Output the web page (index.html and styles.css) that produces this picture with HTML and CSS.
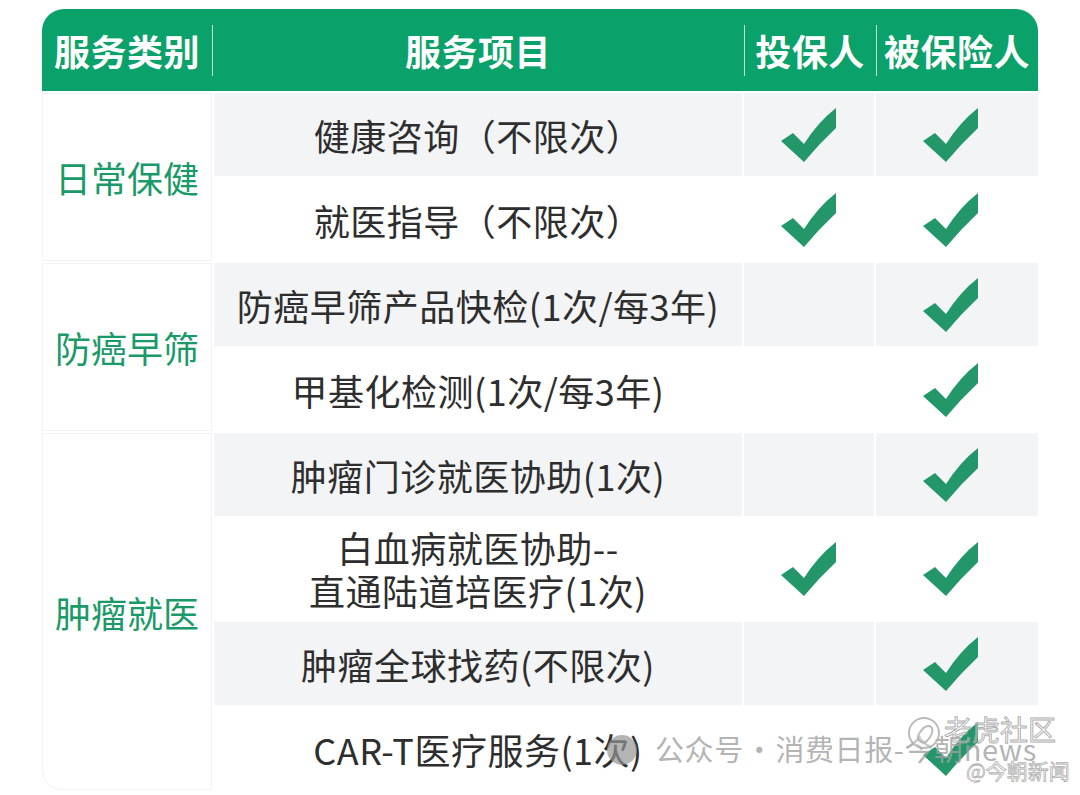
FILE: index.html
```html
<!DOCTYPE html>
<html lang="zh-CN">
<head>
<meta charset="utf-8">
<title>服务项目</title>
<link rel="stylesheet" href="styles.css">
</head>
<body>
<svg class="defs" width="0" height="0" aria-hidden="true">
  <symbol id="chk" viewBox="0 0 56 56">
    <path d="M0 34 L12 26 L23 37 Q37 15 55 1 L55 21 Q38 37 23 55 Z"/>
  </symbol>
</svg>
<div class="page">
  <div class="table">
    <div class="head">
      <div class="hcell">服务类别</div>
      <div class="hcell sep">服务项目</div>
      <div class="hcell sep">投保人</div>
      <div class="hcell sep">被保险人</div>
    </div>
    <div class="body">
      <div class="cat r1-2">日常保健</div>
      <div class="item g">健康咨询（不限次）</div>
      <div class="ck g"><svg><use href="#chk"/></svg></div>
      <div class="ck c2 g"><svg><use href="#chk"/></svg></div>
      <div class="item">就医指导（不限次）</div>
      <div class="ck"><svg><use href="#chk"/></svg></div>
      <div class="ck c2"><svg><use href="#chk"/></svg></div>

      <div class="cat r3-4">防癌早筛</div>
      <div class="item g">防癌早筛产品快检(1次/每3年)</div>
      <div class="ck g"></div>
      <div class="ck c2 g"><svg><use href="#chk"/></svg></div>
      <div class="item">甲基化检测(1次/每3年)</div>
      <div class="ck"></div>
      <div class="ck c2"><svg><use href="#chk"/></svg></div>

      <div class="cat r5-8 last">肿瘤就医</div>
      <div class="item g">肿瘤门诊就医协助(1次)</div>
      <div class="ck g"></div>
      <div class="ck c2 g"><svg><use href="#chk"/></svg></div>
      <div class="item two"><span class="ln">白血病就医协助--</span><span class="ln">直通陆道培医疗(1次)</span></div>
      <div class="ck"><svg><use href="#chk"/></svg></div>
      <div class="ck c2"><svg><use href="#chk"/></svg></div>
      <div class="item g">肿瘤全球找药(不限次)</div>
      <div class="ck g"></div>
      <div class="ck c2 g"><svg><use href="#chk"/></svg></div>
      <div class="item">CAR-T医疗服务(1次)</div>
      <div class="ck"></div>
      <div class="ck c2"><svg><use href="#chk"/></svg></div>
    </div>
  </div>
  <div class="wm-avatar"></div>
  <div class="wm-text">公众号<span class="wm-dot">·</span>消费日报-今朝news</div>
  <div class="wm-logo"><span class="wm-logo-in"></span></div>
  <div class="wm-brand">老虎社区</div>
  <div class="wm-handle">@今朝新闻</div>
</div>
</body>
</html>
```
FILE: styles.css
```css
html, body {
  margin: 0;
  padding: 0;
  background: #ffffff;
}
body {
  font-family: "Noto Sans CJK SC", "Noto Sans", sans-serif;
  width: 1080px;
  height: 795px;
  overflow: hidden;
}
.defs {
  position: absolute;
  width: 0;
  height: 0;
}
.page {
  position: relative;
  width: 1080px;
  height: 795px;
  padding: 9px 0 0 42px;
  box-sizing: border-box;
}
.table {
  width: 996px;
}
.head {
  display: grid;
  grid-template-columns: 170px 532px 132px 162px;
  height: 82px;
  background: #0ba16a;
  border-radius: 22px 22px 0 0;
  color: #ffffff;
  font-weight: 700;
  font-size: 36px;
}
.hcell {
  display: flex;
  align-items: center;
  justify-content: center;
  position: relative;
  letter-spacing: 0.5px;
}
.hcell.sep::before {
  content: "";
  position: absolute;
  left: 0;
  top: 16px;
  bottom: 15px;
  width: 1px;
  background: rgba(255, 255, 255, 0.75);
}
.body {
  margin-top: 2px;
  display: grid;
  grid-template-columns: 170px 528px 130px 162px;
  grid-template-rows: 83px 83px 83px 83px 83px 102px 83px 83px;
  column-gap: 2px;
  row-gap: 2px;
}
.cat {
  grid-column: 1;
  display: flex;
  align-items: center;
  justify-content: center;
  color: #1b9a69;
  font-size: 36px;
  font-weight: 400;
  background: #ffffff;
  box-shadow: inset 0 0 0 1px #f1f2f4;
}
.r1-2 { grid-row: 1 / 3; }
.r3-4 { grid-row: 3 / 5; }
.r5-8 { grid-row: 5 / 9; }
.last { border-bottom-left-radius: 20px; }
.item {
  display: flex;
  align-items: center;
  justify-content: center;
  text-align: center;
  color: #2e2e2e;
  font-size: 36px;
  letter-spacing: 0.5px;
  font-weight: 400;
  background: #ffffff;
}
.item.two {
  flex-direction: column;
  gap: 0;
}
.item.two .ln {
  display: block;
  line-height: 43px;
  height: 43px;
}
.ck {
  display: flex;
  align-items: center;
  justify-content: center;
  background: #ffffff;
}
.ck.c2 svg {
  margin-right: 12px;
}
.g {
  background: #f3f4f6;
}
.ck svg {
  width: 56px;
  height: 56px;
  fill: #23976a;
}
.wm-avatar {
  position: absolute;
  left: 607px;
  top: 735px;
  width: 30px;
  height: 30px;
  border-radius: 50%;
  background: rgba(150, 150, 150, 0.7);
}
.wm-text {
  position: absolute;
  left: 655px;
  top: 729px;
  font-size: 29px;
  line-height: 38px;
  letter-spacing: 0.6px;
  color: rgba(160, 160, 160, 0.8);
  white-space: nowrap;
}
.wm-dot {
  margin: 0 1px;
}
.wm-logo {
  position: absolute;
  left: 908px;
  top: 717px;
  width: 28px;
  height: 28px;
  border-radius: 50%;
  border: 2px solid rgba(170, 170, 170, 0.8);
  background: rgba(255, 255, 255, 0.3);
}
.wm-logo-in {
  position: absolute;
  left: 9px;
  top: 5px;
  width: 9px;
  height: 16px;
  border-radius: 50% 50% 40% 40%;
  border: 2px solid rgba(170, 170, 170, 0.8);
  transform: rotate(35deg);
}
.wm-brand {
  position: absolute;
  left: 944px;
  top: 710px;
  font-size: 28px;
  line-height: 38px;
  color: rgba(255, 255, 255, 0.4);
  -webkit-text-stroke: 1px rgba(160, 160, 160, 0.85);
  white-space: nowrap;
}
.wm-handle {
  position: absolute;
  left: 966px;
  top: 756px;
  font-size: 21px;
  line-height: 28px;
  color: rgba(255, 255, 255, 0.4);
  -webkit-text-stroke: 0.8px rgba(160, 160, 160, 0.85);
  white-space: nowrap;
}
```
